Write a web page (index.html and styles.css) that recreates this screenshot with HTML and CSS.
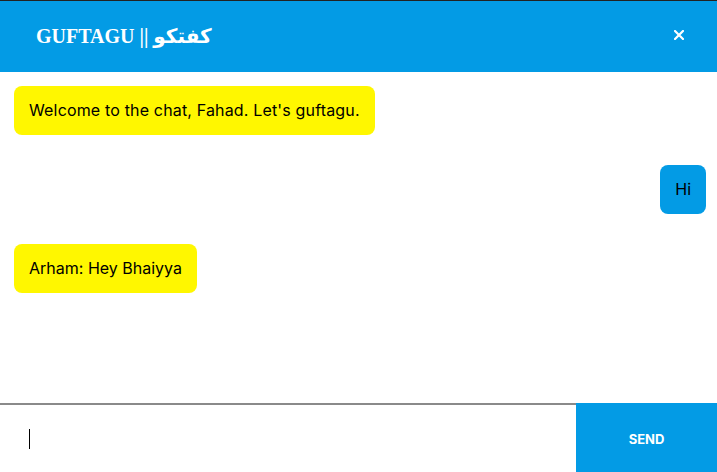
FILE: index.html
```html
<!DOCTYPE html>
<html>
<head>
<meta charset="utf-8">
<link rel="stylesheet" href="styles.css">
</head>
<body>
<div class="chat">
  <header class="header">
    <h1 class="title">GUFTAGU || <span class="urdu">کفتکو</span></h1>
    <svg class="close" width="10" height="10" viewBox="0 0 10 10" aria-label="close">
      <path d="M1 1 L9 9 M9 1 L1 9" stroke="#fff" stroke-width="2.2" stroke-linecap="square"/>
    </svg>
  </header>
  <main class="messages">
    <div class="msg msg-in msg-wide">Welcome to the chat, Fahad. Let's guftagu.</div>
    <div class="msg msg-out">Hi</div>
    <div class="msg msg-in">Arham: Hey Bhaiyya</div>
  </main>
  <footer class="composer">
    <div class="input"><span class="caret"></span></div>
    <button class="send">SEND</button>
  </footer>
</div>
</body>
</html>
```

FILE: styles.css
```css
html, body {
  margin: 0;
  padding: 0;
  height: 100%;
  background: #ffffff;
}
.chat {
  display: flex;
  flex-direction: column;
  height: 100vh;
  font-family: "Inter", "Liberation Sans", sans-serif;
}
.header {
  flex: 0 0 71px;
  border-top: 1px solid #222;
  background: #039be5;
  display: flex;
  align-items: center;
  justify-content: space-between;
  padding: 0 33px 0 36px;
}
.title {
  margin: 0;
  color: #fff;
  font-family: "Liberation Serif", "DejaVu Serif", serif;
  font-weight: bold;
  font-size: 20px;
  position: relative;
  top: -1px;
}
.urdu {
  font-family: "DejaVu Sans", sans-serif;
}
.close {
  display: block;
  position: relative;
  top: -2px;
}
.messages {
  flex: 1;
  display: flex;
  flex-direction: column;
  align-items: flex-start;
  gap: 30px;
  padding: 14px 11px 14px 14px;
}
.msg {
  padding: 15px;
  border-radius: 8px;
  font-size: 16px;
  line-height: 19px;
  color: #000;
}
.msg-wide {
  letter-spacing: 0.16px;
}
.msg-in {
  background: #fff700;
}
.msg-out {
  background: #039be5;
  align-self: flex-end;
}
.composer {
  flex: 0 0 69px;
  display: flex;
}
.input {
  flex: 1;
  border-top: 2px solid #8a8a8a;
  display: flex;
  align-items: center;
  padding-left: 29px;
}
.caret {
  width: 1px;
  height: 20px;
  background: #000;
}
.send {
  width: 141px;
  border: none;
  background: #039be5;
  color: #fff;
  font-family: "Inter", "Liberation Sans", sans-serif;
  font-weight: bold;
  font-size: 13px;
  padding: 3px 0 0 0;
}
```
